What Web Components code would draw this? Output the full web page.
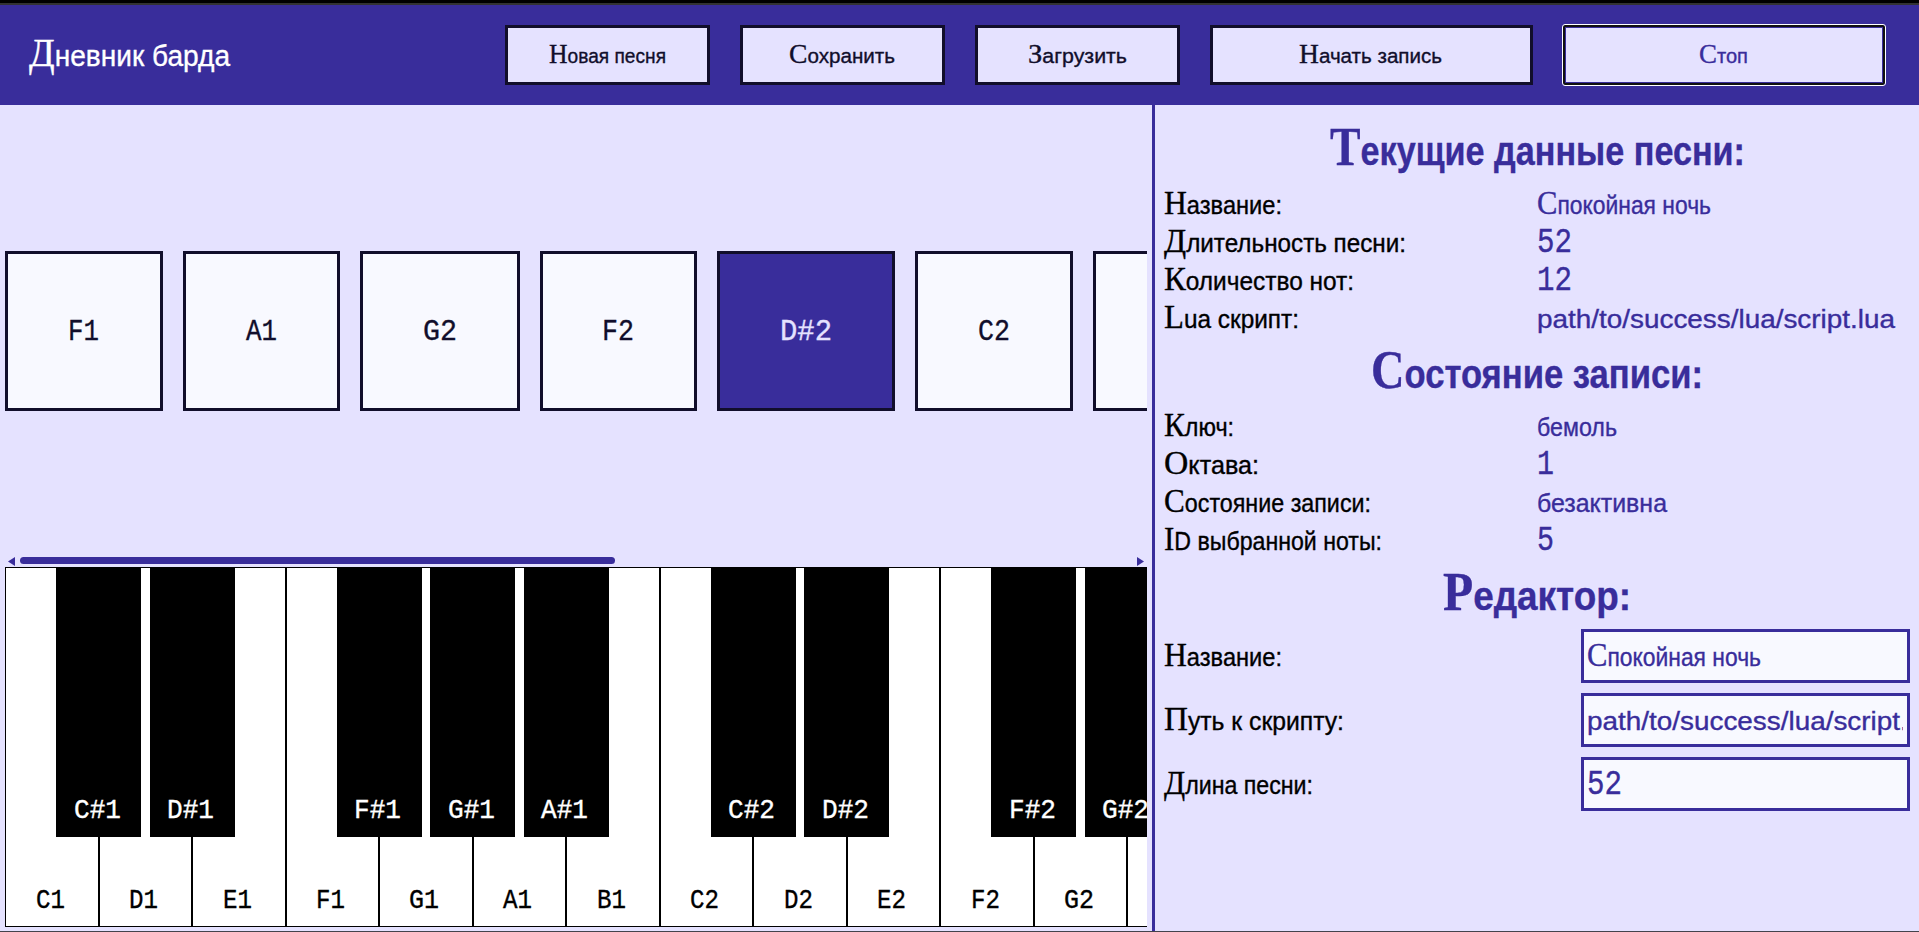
<!DOCTYPE html>
<html lang="ru">
<head>
<meta charset="utf-8">
<title>Дневник барда</title>
<style>
  html, body { margin: 0; height: 100%; overflow: hidden; }
  body {
    --accent: #392d9b; --pale: #e5e2ff; --ink: #110e2b; --card: #f8f9ff;
    background: var(--pale); font-family: "Liberation Sans", Arial, sans-serif; color: #000;
  }
</style>
</head>
<body>
<bard-app></bard-app>
<script>
// One line of lettering: tall serif initial, compact sans body, condensed to a set width.
// The host box is exactly one capital high and its bottom edge is the baseline.
class FitText extends HTMLElement {
  connectedCallback() {
    const cap = +this.getAttribute('cap') || 23;
    const kind = this.getAttribute('kind') || 'initial';
    const width = +this.getAttribute('w');
    const mono = kind === 'mono';
    const fs = mono ? cap * 1.5 : cap * 1.09;
    const lh = 2 * cap - fs * (mono ? 0.533 : 0.693);
    const root = this.attachShadow({ mode: 'open' });
    root.innerHTML = `<style>
      :host { display: block; flex: none; width: ${width}px; height: ${cap}px; }
      span { display: inline-block; vertical-align: top; white-space: pre; transform-origin: 0 50%;
        font-size: ${fs}px; line-height: ${lh}px; -webkit-text-stroke: .35px;
        ${mono ? 'font-family: "Liberation Mono", monospace;' : ''} }
      ${kind === 'initial' ? `span::first-letter { font-family: "Liberation Serif", serif; font-size: ${cap * 1.46}px; line-height: 0; }` : ''}
    </style><span></span>`;
    const span = root.querySelector('span');
    span.textContent = this.getAttribute('text');
    span.style.transform = `translate(-1px, ${cap > 30 ? 1 : 0.5}px) scaleX(${(width + 1) / span.getBoundingClientRect().width})`;
  }
}

class BardButton extends HTMLElement {
  connectedCallback() {
    this.attachShadow({ mode: 'open' }).innerHTML = `<style>
      :host { box-sizing: border-box; position: relative; display: flex; justify-content: center;
        width: 205px; height: 60px; padding-top: 15px; border: 3px solid var(--ink);
        background: var(--pale); color: var(--ink); }
      :host([wide]) { width: 322.5px; }
      :host([focused]) { border-color: var(--accent); color: var(--accent); }
      :host([focused])::after { content: ""; position: absolute; inset: -4px; border: 1px solid #fff;
        border-radius: 3px; box-shadow: inset 0 0 0 2px #101010; }
    </style><slot></slot>`;
  }
}

class BardHeader extends HTMLElement {
  connectedCallback() {
    const buttons = [['Новая песня', 116], ['Сохранить', 105], ['Загрузить', 98],
      ['Начать запись', 142, 'wide'], ['Стоп', 48, 'wide focused']];
    this.attachShadow({ mode: 'open' }).innerHTML = `<style>
      :host { box-sizing: border-box; display: flex; justify-content: space-between; height: 105px;
        padding: 20px 34px 0 30px; border-top: 3px solid #000; background: var(--accent);
        box-shadow: inset 0 2px #333; color: #fff; }
      nav { display: flex; gap: 30px; padding-top: 2px; }
      .title { padding-top: 15px; }
    </style>
    <div class="title"><fit-text text="Дневник барда" w="200" cap="27"></fit-text></div>
    <nav>${buttons.map(([t, w, a = '']) =>
      `<bard-button ${a}><fit-text text="${t}" w="${w}" cap="19"></fit-text></bard-button>`).join('')}</nav>`;
  }
}

class NoteStrip extends HTMLElement {
  connectedCallback() {
    const notes = [['F1', 158, 30], ['A1', 157, 30], ['G2', 160, 33], ['F2', 157, 31],
      ['D#2', 178, 51], ['C2', 158, 31], ['', 158, 0]];
    this.attachShadow({ mode: 'open' }).innerHTML = `<style>
      :host { display: flex; flex-direction: column; height: 462px; }
      .track { flex: 1; display: flex; align-items: center; gap: 20px; overflow: hidden; }
      .note { box-sizing: border-box; flex: none; height: 160px; display: flex; justify-content: center;
        padding-top: 65px; border: 3px solid var(--ink); background: var(--card); color: var(--ink); }
      .on { background: var(--accent); color: var(--pale); }
      .bar { display: flex; align-items: center; height: 8px; padding: 0 3px 2px; }
      .thumb { width: 595px; height: 7px; margin: 0 auto 1px 5px; border-radius: 4px; background: var(--accent); }
      svg { width: 7px; height: 9px; fill: var(--accent); }
    </style>
    <div class="track">${notes.map(([t, w, tw]) =>
      `<div class="note ${t === 'D#2' ? 'on' : ''}" style="width:${w}px">${t ? `<fit-text kind="mono" text="${t}" w="${tw}" cap="20"></fit-text>` : ''}</div>`).join('')}</div>
    <div class="bar"><svg viewBox="0 0 7 9"><path d="M7 0v9L0 4.5z"/></svg><div class="thumb"></div><svg viewBox="0 0 7 9"><path d="M0 0v9l7-4.5z"/></svg></div>`;
  }
}

class PianoKeys extends HTMLElement {
  connectedCallback() {
    const white = ['C1', 'D1', 'E1', 'F1', 'G1', 'A1', 'B1', 'C2', 'D2', 'E2', 'F2', 'G2', ''];
    const sharp = /^[CDFGA]/;
    this.attachShadow({ mode: 'open' }).innerHTML = `<style>
      :host { display: flex; height: 360px; overflow: hidden; }
      .key { position: relative; box-sizing: border-box; flex: none; width: 93.5px; height: 360px;
        display: flex; justify-content: center; padding: 322px 2px 0 0; border: 1px solid #000; background: #fff; }
      .black { position: absolute; z-index: 1; box-sizing: border-box; top: -1px; left: 50px; width: 85px;
        height: 270px; display: flex; justify-content: center; padding: 233px 2px 0 0; background: #000; color: #fff; }
    </style>${white.map(n => `<div class="key">${n ? `<fit-text kind="mono" text="${n}" w="${n[0] === 'G' ? 29 : 28}" cap="18"></fit-text>` : ''}${sharp.test(n) ?
      `<div class="black"><fit-text kind="mono" text="${n[0]}#${n[1]}" w="46" cap="18"></fit-text></div>` : ''}</div>`).join('')}`;
  }
}

class SongPanel extends HTMLElement {
  connectedCallback() {
    const row = ([l, lw, v, vw, kind]) => `<div class="row"><fit-text text="${l}" w="${lw}"></fit-text>
      <fit-text class="value" text="${v}" w="${vw}" kind="${kind}"></fit-text></div>`;
    const edit = ([l, lw, v, vw, kind]) => `<div class="field"><fit-text text="${l}" w="${lw}"></fit-text>
      <div class="input"><div class="clip"><fit-text text="${v}" w="${vw}" kind="${kind}"></fit-text></div></div></div>`;
    const head = (t, w) => `<h2><fit-text text="${t}" w="${w}" cap="37"></fit-text></h2>`;
    this.attachShadow({ mode: 'open' }).innerHTML = `<style>
      :host { box-sizing: border-box; display: block; padding: 7px 9px 0 10px; border-left: 3px solid var(--accent); }
      h2 { box-sizing: border-box; display: flex; justify-content: center; height: 70px; margin: 0;
        padding-top: 15px; color: var(--accent); }
      h2:first-of-type { height: 71px; }
      h2:last-of-type { height: 72px; }
      .row { display: grid; grid-template-columns: 372.5px 1fr; box-sizing: border-box; height: 38px; padding-top: 7px; }
      .value { color: var(--accent); }
      .field { display: flex; justify-content: space-between; align-items: flex-start; height: 54px; margin-bottom: 10px; }
      .field > fit-text { margin-top: 13px; }
      .input { box-sizing: border-box; width: 329px; height: 54px; padding: 0 4px; border: 3px solid var(--accent);
        background: var(--card); color: var(--accent); }
      .clip { height: 38px; margin-left: -1px; padding: 10px 0 0 1px; overflow: hidden; }
    </style>
    ${head('Текущие данные песни:', 414)}
    ${[['Название:', 117, 'Спокойная ночь', 173, 'initial'], ['Длительность песни:', 241, '52', 34, 'mono'],
      ['Количество нот:', 189, '12', 34, 'mono'], ['Lua скрипт:', 134, 'path/to/success/lua/script.lua', 357, 'plain']].map(row).join('')}
    ${head('Состояние записи:', 331)}
    ${[['Ключ:', 69, 'бемоль', 79, 'plain'], ['Октава:', 94, '1', 16, 'mono'],
      ['Состояние записи:', 206, 'безактивна', 129, 'plain'], ['ID выбранной ноты:', 217, '5', 16, 'mono']].map(row).join('')}
    ${head('Редактор:', 187)}
    ${[['Название:', 117, 'Спокойная ночь', 173, 'initial'], ['Путь к скрипту:', 179, 'path/to/success/lua/script.lua', 357, 'plain'],
      ['Длина песни:', 148, '52', 34, 'mono']].map(edit).join('')}`;
  }
}

class BardApp extends HTMLElement {
  connectedCallback() {
    this.attachShadow({ mode: 'open' }).innerHTML = `<style>
      :host { box-sizing: border-box; display: flex; flex-direction: column; height: 932px;
        border-bottom: 1px solid #44434c; background: var(--pale); }
      bard-header { flex: none; }
      main { flex: 1; display: grid; grid-template-columns: 1152px 1fr; }
      .play { box-sizing: border-box; padding: 0 5px; min-width: 0; }
    </style>
    <bard-header></bard-header>
    <main><div class="play"><note-strip></note-strip><piano-keys></piano-keys></div><song-panel></song-panel></main>`;
  }
}

customElements.define('fit-text', FitText);
customElements.define('bard-button', BardButton);
customElements.define('bard-header', BardHeader);
customElements.define('note-strip', NoteStrip);
customElements.define('piano-keys', PianoKeys);
customElements.define('song-panel', SongPanel);
customElements.define('bard-app', BardApp);
</script>
</body>
</html>
